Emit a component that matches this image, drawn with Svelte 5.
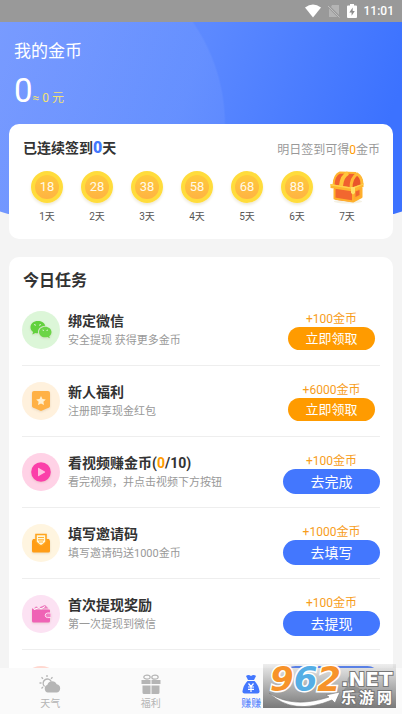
<script>
	let streak = 0;
	let coins = 0;
	let active = 'earn';

	const days = [
		{ day: 1, coins: 18 },
		{ day: 2, coins: 28 },
		{ day: 3, coins: 38 },
		{ day: 4, coins: 58 },
		{ day: 5, coins: 68 },
		{ day: 6, coins: 88 },
		{ day: 7, chest: true }
	];

	const tasks = [
		{ icon: 'wechat', title: '绑定微信', text: '安全提现 获得更多金币', reward: 100, button: '立即领取', claim: true },
		{ icon: 'gift', title: '新人福利', text: '注册即享现金红包', reward: 6000, button: '立即领取', claim: true },
		{ icon: 'video', title: '看视频赚金币', done: 0, total: 10, text: '看完视频，并点击视频下方按钮', reward: 100, button: '去完成' },
		{ icon: 'invite', title: '填写邀请码', text: '填写邀请码送1000金币', reward: 1000, button: '去填写' },
		{ icon: 'wallet', title: '首次提现奖励', text: '第一次提现到微信', reward: 100, button: '去提现' },
		{ icon: 'share', button: '' }
	];

	const tabs = [
		{ id: 'weather', label: '天气' },
		{ id: 'welfare', label: '福利' },
		{ id: 'earn', label: '赚赚' },
		{ id: 'mine', label: '我的' }
	];
</script>

<div class="app">
	<header class="status">
		<svg width="16" height="14" viewBox="0 0 16 14"><path d="M0 3.6Q8-2.4 16 3.6L8 13.5Z" fill="#fff" /></svg>
		<svg width="12" height="14" viewBox="0 0 12 14">
			<path d="M4 1h7v10L3 3Z M1 4.6 9.4 13H1Z" fill="#b4b4b4" />
			<path d="M0 2l11.5 11.5" stroke="#bdbdbd" />
		</svg>
		<svg width="10" height="14" viewBox="0 0 10 14">
			<path d="M3 0h4v1.5h2q1 0 1 1V13q0 1-1 1H1q-1 0-1-1V2.5q0-1 1-1h2Z" fill="#fff" />
			<path d="M5.7 3.5 2.3 8.4h2.3v3.3L7.8 7H5.7Z" fill="#8d8d8d" />
		</svg>
		<span>11:01</span>
	</header>

	<main>
		<section class="hero">
			<h1>我的金币</h1>
			<p class="balance">{coins}<small>≈ 0 元</small></p>
		</section>

		<section class="card signin">
			<div class="signhead">
				<h2>已连续签到<b>{streak}</b>天</h2>
				<p>明日签到可得<span>0</span>金币</p>
			</div>
			<ul class="days">
				{#each days as d}
					<li>
						{#if d.chest}
							<svg width="36" height="34" viewBox="0 0 36 34">
								<ellipse cx="19" cy="31.5" rx="14" ry="2" fill="#f4f1e4" />
								<path d="M4 16Q4 5 11 2.5L27 3Q34 6 34 15L23 19Z" fill="#f0602f" />
								<path d="M5 18 24 20V32L8 30Q5 29.500 5 27Z" fill="#f2672f" />
								<path d="M24 20 33 16V27L24 32Z" fill="#ffa62e" />
								<path d="M21 18Q21 7 28 3.500 34 6 34 15Z" fill="#e9552b" />
								<path d="M4.500 15Q5 5 11 2.500L27 3" fill="none" stroke="#ffb42f" stroke-width="2" />
								<path d="M12 16Q13 6 19 3" fill="none" stroke="#ffc63a" stroke-width="4" />
								<path d="M22 18Q22 8 28 4Q33 7 33 14" fill="none" stroke="#ffb935" stroke-width="3" />
								<path d="M1.500 14 23 17.500 34.500 13.500V17L24 21.500 1.500 18Z" fill="#ffb62e" />
								<path d="M1.500 14 23 17.500 34.500 13.500V14.500L23.500 19 1.500 15.500Z" fill="#ffd24e" />
								<path d="M5.500 18.500V28.500L24 31.500 32.500 27V18M24 21V31" fill="none" stroke="#ffb02c" stroke-width="2" stroke-linejoin="round" />
								<path d="M26.500 21.500 30.500 20V25L26.500 27Z" fill="#f0652e" />
								<path d="M22 17h4v6l-2 1.500-2-1.500Z" fill="#ffe067" />
							</svg>
						{:else}
							<span class="coin">{d.coins}</span>
						{/if}
						<span class="day">{d.day}天</span>
					</li>
				{/each}
			</ul>
		</section>

		<section class="card tasks">
			<h2>今日任务</h2>
			<ul>
				{#each tasks as task}
					<li class="task">
						<span class="icon {task.icon}">
							{#if task.icon == 'wechat'}
								<svg width="22" height="20" viewBox="0 0 22 20">
									<path d="M8 1C3.5 1 .5 3.7.5 7.2c0 2 1 3.6 2.6 4.700l-.8 2.500 3-1.500c.9.2 1.700.4 2.700.4C7.500 8.500 11 5.700 15.300 5.800 14.500 3 11.700 1 8 1Z" fill="#62d13d" />
									<path d="M21.500 12c0-3-2.800-5.300-6.200-5.300S9 9 9 12s2.700 5.300 6.200 5.300c.8 0 1.500-.1 2.200-.3l2.400 1.300-.6-2.100c1.400-1 2.300-2.400 2.300-4.200Z" fill="#6bd547" />
									<path d="M4 4.500l2 .8M9 5.300l2-.8M12.500 10l1.500.5M16.500 10.500l1.500-.5" stroke="#d9f7cd" />
								</svg>
							{:else if task.icon == 'gift'}
								<svg width="20" height="22" viewBox="0 0 20 22">
									<path d="M3 1h14q2 0 2 2v13q0 1-1 1.500L10 21 2 17.500Q1 17 1 16V3q0-2 2-2Z" fill="#ffb145" />
									<path d="m10 6 1.500 3 3.300.5-2.400 2.300.6 3.200-3-1.500L7 15l.6-3.200-2.400-2.300 3.300-.5Z" fill="#fff0cf" />
								</svg>
							{:else if task.icon == 'video'}
								<svg width="20" height="20" viewBox="0 0 20 20">
									<circle cx="10" cy="10" r="9.8" fill="#fb3fa9" />
									<path d="M7 6.300q0-.8.8-.4l6 3.500q.8.600 0 1.200l-6 3.500q-.8.400-.8-.4Z" fill="#ffc1e0" />
								</svg>
							{:else if task.icon == 'invite'}
								<svg width="20" height="20" viewBox="0 0 20 20">
									<path d="M2 6h3v3l4 4h2l4-4V6h3l1 2v10q0 1.500-1.500 1.500h-15Q1 19.500 1 18V8Z" fill="#ff9d16" />
									<path d="M5 1.500h10V9l-4 3.500H9L5 9Z" fill="#fff7dc" stroke="#ffa51f" stroke-width="1.6" />
									<path d="M7 4.500h6M7 6.800h6M8 9h4" stroke="#ffb030" stroke-width="1.2" />
								</svg>
							{:else if task.icon == 'wallet'}
								<svg width="20" height="18" viewBox="0 0 20 18">
									<path d="M3 3.500 5 1.500l3 1L14 0l3.500 3.500Z" fill="#ef7cc0" />
									<path d="M1 3q1 1.500 3 1.500h14q1 0 1 1V16q0 1.500-1.500 1.500h-15Q1 17.500 1 16Z" fill="#ef62b5" />
									<path d="M3 4.500 8 2.500l2 1.500 4-2.500" fill="none" stroke="#fff" />
									<path d="M20 8h-3.500q-2.300.2-2.300 2.300t2.300 2.300H20Z" fill="#f27fc4" stroke="#ffe1f3" />
								</svg>
							{/if}
						</span>
						<div class="info">
							{#if task.title}
								<h3>{task.title}{#if task.total}(<em>{task.done}</em>/{task.total}){/if}</h3>
								<p>{task.text}</p>
							{/if}
						</div>
						<div class="action">
							{#if task.reward}
								<span class="reward">+{task.reward}金币</span>
							{/if}
							<button class:claim={task.claim} aria-label={task.button || task.icon}>{task.button}</button>
						</div>
					</li>
				{/each}
			</ul>
		</section>
	</main>

	<nav>
		{#each tabs as tab}
			<button class:on={active == tab.id} on:click={() => (active = tab.id)}>
				<svg width="22" height="20" viewBox="0 0 22 20" fill="currentColor">
					{#if tab.id == 'weather'}
						<path d="M8 1v2M2.500 3.200l1.500 1.500M.5 9h2M13.500 3.200 12 4.700M2.500 14.500 4 13" fill="none" stroke="currentColor" stroke-width="1.3" />
						<path d="M5.500 12.500a4.300 4.300 0 1 1 6.800-5" fill="none" stroke="currentColor" stroke-width="1.3" />
						<path d="M9 18.500a4 4 0 0 1-.6-7.700 5 5 0 0 1 9.300-.6 4.200 4.200 0 0 1-.2 8.300Z" />
					{:else if tab.id == 'welfare'}
						<ellipse cx="7" cy="3.2" rx="3.2" ry="2" fill="none" stroke="currentColor" stroke-width="1.2" />
						<ellipse cx="15" cy="3.2" rx="3.2" ry="2" fill="none" stroke="currentColor" stroke-width="1.2" />
						<path d="M1.500 6h9v4h-9ZM11.500 6h9v4h-9ZM2.500 11.500h8V20H4q-1.500 0-1.500-1.500ZM11.500 11.500h8v7q0 1.500-1.500 1.500h-6.500Z" />
					{:else if tab.id == 'earn'}
						<path d="M6 2q2.500-2 5 0 2.500-2 5 0l-2 4H8Z" />
						<path d="M7.500 7h7q4 4 5 10 .3 2.500-2 2.500h-13q-2.300 0-2-2.500 1-6 5-10Z" />
						<path d="m8.500 9.500 2.500 3 2.500-3M8 13h6M8 15.300h6M11 12.500V18" fill="none" stroke="#fff" stroke-width="1.2" />
					{:else}
						<circle cx="11" cy="6" r="4.5" />
						<path d="M2 19q0-7 9-7t9 7Z" />
					{/if}
				</svg>
				<span>{tab.label}</span>
			</button>
		{/each}
	</nav>

	<aside class="stamp">
		<div class="number"><span>9</span><span class="six">6</span><span>2</span></div>
		<div class="site">
			<span class="net">.NET</span>
			<span class="name"><i>乐</i><i>游</i><i>网</i></span>
		</div>
		<svg width="74" height="16" viewBox="0 0 74 16">
			<path d="M1 1Q25 17 61 5L58 3 72 0 67 11 64 8Q25 24 1 1Z" fill="#fff" stroke="#777" stroke-width=".6" />
		</svg>
	</aside>
</div>

<style>
	:global(body) {
		margin: 0;
		background: #f4f4f4;
	}
	.app {
		position: relative;
		display: flex;
		flex-direction: column;
		height: 100vh;
		overflow: hidden;
		background: #f4f4f4;
		color: #333;
		font-family: Roboto, "Noto Sans CJK SC", sans-serif;
	}
	h1, h2, h3, p, ul {
		margin: 0;
		padding: 0;
		list-style: none;
	}
	button {
		border: none;
		padding: 0;
		font-family: inherit;
		cursor: pointer;
	}
	.status {
		display: flex;
		flex: none;
		align-items: center;
		justify-content: flex-end;
		gap: 7px;
		height: 22px;
		padding-right: 8px;
		background: #999;
		color: #fff;
		font-size: 12px;
		font-weight: 500;
	}
	main {
		flex: 1;
		min-height: 0;
		overflow-y: auto;
		scrollbar-width: none;
	}
	.hero {
		box-sizing: border-box;
		height: 192px;
		padding: 17px 14px 0;
		color: #fff;
		background:
			radial-gradient(circle at 44px 103px, rgba(255, 255, 255, 0.06) 180px, transparent 182px),
			linear-gradient(110deg, #7095ff, #5c89ff 45%, #3c72ff 90%);
		clip-path: ellipse(100% 114% at 50% 0);
	}
	h1 {
		font-size: 17px;
		font-weight: 400;
		line-height: 24px;
	}
	.balance {
		font-size: 33px;
		line-height: 40px;
		margin-top: 8px;
	}
	small {
		font-size: 12px;
		color: #f3e36f;
	}
	.card {
		position: relative;
		margin: 0 9px;
		padding: 0 13px;
		background: #fff;
		border-radius: 10px;
	}
	.signin {
		margin-top: -90px;
		padding-top: 14px;
		padding-bottom: 14px;
	}
	.signhead {
		display: flex;
		justify-content: space-between;
		align-items: center;
		height: 20px;
	}
	.signhead h2 {
		padding-left: 1px;
		font-size: 14px;
		line-height: 20px;
		font-weight: 700;
	}
	.signhead b {
		font-size: 16px;
		color: #4377fe;
	}
	.signhead p {
		font-size: 12px;
		color: #999;
	}
	.signhead span,
	em {
		color: #ff9b00;
		font-style: normal;
	}
	.days {
		display: grid;
		grid-template-columns: repeat(7, 1fr);
		margin-top: 12px;
		padding-right: 8px;
	}
	.days li {
		display: flex;
		flex-direction: column;
		align-items: center;
		gap: 5px;
	}
	.coin {
		box-sizing: border-box;
		width: 32px;
		height: 32px;
		margin: 1px 0;
		border: 4px solid #ffdc3c;
		border-radius: 50%;
		background: linear-gradient(#ffca3c, #ffb343);
		box-shadow: 0 2px 3px #eee9d8;
		color: #fffae8;
		font-size: 13px;
		line-height: 24px;
		text-align: center;
	}
	.day {
		font-size: 10px;
		line-height: 16px;
		color: #555;
	}
	.tasks {
		margin-top: 18px;
		padding-top: 12px;
	}
	.tasks h2 {
		padding-left: 1px;
		font-size: 16px;
		line-height: 24px;
	}
	.tasks ul {
		padding-top: 2px;
	}
	.task {
		box-sizing: border-box;
		display: flex;
		align-items: flex-start;
		height: 71px;
		padding-top: 16px;
		border-bottom: 1px solid #eee;
	}
	.icon {
		display: flex;
		flex: none;
		align-items: center;
		justify-content: center;
		width: 38px;
		height: 38px;
		border-radius: 50%;
	}
	.icon svg {
		filter: drop-shadow(0 1px 1px rgba(120, 80, 20, 0.15));
	}
	.wechat {
		background: #dcf6d8;
	}
	.gift {
		background: #fff1dd;
	}
	.video {
		background: #ffd2e6;
	}
	.invite {
		background: #fff5e0;
	}
	.wallet {
		background: #fce2f3;
	}
	.share {
		background: #ffd8d0;
	}
	.info {
		flex: 1;
		padding-left: 8px;
	}
	h3 {
		font-size: 14px;
		line-height: 20px;
		font-weight: 700;
	}
	.info p {
		font-size: 11px;
		line-height: 20px;
		color: #999;
	}
	.action {
		display: flex;
		flex: none;
		flex-direction: column;
		align-items: center;
		width: 97px;
	}
	.reward {
		font-size: 12px;
		line-height: 16px;
		color: #f79d1b;
	}
	.action button {
		width: 97px;
		height: 25px;
		border-radius: 13px;
		background: #4377fe;
		color: #fff;
		font-size: 14px;
		line-height: 24px;
	}
	.action .claim {
		width: 87px;
		height: 23px;
		background: #ff9b00;
		font-size: 13px;
		line-height: 22px;
	}
	nav {
		display: flex;
		flex: none;
		height: 46px;
		background: #fafafa;
	}
	nav button {
		display: flex;
		flex: 1;
		flex-direction: column;
		align-items: center;
		padding-top: 6px;
		gap: 2px;
		background: none;
		color: #b5b5b5;
		font-size: 10px;
		line-height: 16px;
	}
	nav .on {
		color: #4377fe;
	}
	.stamp {
		position: absolute;
		right: 6px;
		bottom: 6px;
		display: flex;
		box-sizing: border-box;
		width: 133px;
		height: 44px;
		padding-left: 7px;
		background: linear-gradient(rgba(170, 170, 170, 0.2), rgba(115, 115, 115, 0.95));
		color: #fff;
		font-weight: 700;
	}
	.number {
		font: italic 700 34px/30px "DejaVu Sans", sans-serif;
		color: #f7932a;
		-webkit-text-stroke: 3px #fff;
		paint-order: stroke fill;
	}
	.six {
		color: #55aee5;
	}
	.site {
		display: flex;
		flex-direction: column;
		-webkit-text-stroke: 2px #777;
		paint-order: stroke fill;
	}
	.net {
		font: 700 20px/24px "DejaVu Sans", sans-serif;
		margin-top: 3px;
	}
	.name {
		display: flex;
		gap: 3px;
		font-size: 15px;
		line-height: 14px;
	}
	.name i {
		font-style: normal;
	}
	.stamp svg {
		position: absolute;
		left: 5px;
		bottom: 0;
	}
</style>
